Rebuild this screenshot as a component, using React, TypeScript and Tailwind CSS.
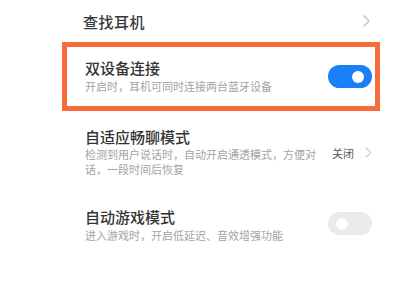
import { useState } from "react";

const font = { fontFamily: '"Noto Sans CJK SC", "Noto Sans", sans-serif' };

const Chevron = ({ className }: { className?: string }) => (
  <svg viewBox="0 0 8 14" className={className} fill="none">
    <polyline points="1,1 7,7 1,13" stroke="#bdbdbd" strokeWidth="1.3" strokeLinecap="round" strokeLinejoin="round" />
  </svg>
);

const Toggle = ({ on }: { on: boolean }) => (
  <div
    className={
      on
        ? "w-[44px] h-[23px] rounded-full bg-[#1a80f7] flex items-center justify-end pr-[8px]"
        : "w-[44px] h-[23px] rounded-full bg-[#ebebeb] flex items-center justify-start pl-[8px]"
    }
  >
    <div className="w-[12px] h-[12px] rounded-full bg-white" />
  </div>
);

export default function App() {
  const [dual, setDual] = useState(true);
  const [game, setGame] = useState(false);

  return (
    <div className="w-[400px] h-[300px] bg-white overflow-hidden pl-[62px] pr-[20px]" style={font}>
      {/* 查找耳机 */}
      <div className="h-[42px] flex items-center justify-between pl-[21px] pr-[10px] pt-[2px]">
        <span className="text-[15px] leading-[18px] font-medium text-[#3a3a3a] tracking-[0.5px]">查找耳机</span>
        <Chevron className="w-[7px] h-[14px] -mt-[3px]" />
      </div>

      {/* 双设备连接 (highlighted) */}
      <div className="h-[69px] border-[5px] border-[#f76b3c] flex items-center justify-between pl-[18px] pr-[3px]">
        <div className="flex flex-col gap-[2px] -mt-[2px]">
          <span className="text-[15px] leading-[18px] font-medium text-[#333]">双设备连接</span>
          <span className="text-[11px] leading-[14px] text-[#a3a3a3]">开启时，耳机可同时连接两台蓝牙设备</span>
        </div>
        <button onClick={() => setDual(!dual)}>
          <Toggle on={dual} />
        </button>
      </div>

      {/* 自适应畅聊模式 */}
      <div className="flex items-center justify-between pl-[23px] pr-[8px] pt-[17px]">
        <div className="flex flex-col gap-[1px] w-[232px]">
          <span className="text-[15px] leading-[18px] font-medium text-[#333]">自适应畅聊模式</span>
          <span className="text-[11px] leading-[15px] text-[#a3a3a3]">
            检测到用户说话时，自动开启通透模式，方便对话，一段时间后恢复
          </span>
        </div>
        <div className="flex items-center gap-[11px]">
          <span className="text-[11px] leading-[14px] text-[#555]">关闭</span>
          <Chevron className="w-[7px] h-[11px]" />
        </div>
      </div>

      {/* 自动游戏模式 */}
      <div className="flex items-center justify-between pl-[23px] pr-[8px] pt-[31px]">
        <div className="flex flex-col gap-[2px]">
          <span className="text-[15px] leading-[18px] font-medium text-[#333]">自动游戏模式</span>
          <span className="text-[11px] leading-[14px] text-[#a3a3a3]">进入游戏时，开启低延迟、音效增强功能</span>
        </div>
        <button onClick={() => setGame(!game)} className="-mt-[3px]">
          <Toggle on={game} />
        </button>
      </div>
    </div>
  );
}
